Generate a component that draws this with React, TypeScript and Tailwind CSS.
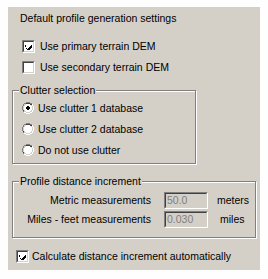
import React from "react";

const font = { fontFamily: '"Liberation Sans", Arial, sans-serif' };

function CheckBox({ checked }: { checked: boolean }) {
  return (
    <div className="w-[13px] h-[13px] border border-t-[#808080] border-l-[#808080] border-b-white border-r-white shrink-0">
      <div className="w-full h-full border border-t-[#404040] border-l-[#404040] border-b-[#d4d0c8] border-r-[#d4d0c8] bg-white flex items-center justify-center">
        {checked && (
          <svg width="7" height="7" viewBox="0 0 7 7" shapeRendering="crispEdges">
            <path d="M0 2h1v3h1v1h1v-1h1v-1h1v-1h1v-1h1v3h-1v1h-1v1h-1v1h-1v-1h-1v-1h-1z" fill="#000" />
          </svg>
        )}
      </div>
    </div>
  );
}

function Radio({ checked }: { checked: boolean }) {
  return (
    <svg width="12" height="12" viewBox="0 0 12 12" className="shrink-0" shapeRendering="crispEdges">
      <path d="M4 0h4v1h2v1h-2v-1h-4v1h-2v2h-1v4h1v2h-1v-2h-1v-4h1v-2h1v-1h2z" fill="#808080" />
      <path d="M4 1h4v1h2v1h-2v-1h-4v1h-2v1h-1v4h1v1h-1v-5h1v-1h2z" fill="#404040" />
      <path d="M10 2h1v2h1v4h-1v2h-1v1h-2v1h-4v-1h-2v-1h2v1h4v-1h2v-2h1v-4h-1z" fill="#ffffff" />
      <path d="M4 2h4v1h1v1h1v4h-1v1h-1v1h-4v-1h-1v-1h-1v-4h1v-1h1z" fill="#ffffff" />
      <path d="M10 4h1v4h-1v2h-2v1h-4v-1h4v-1h1v-1h1z" fill="#d4d0c8" />
      {checked && <path d="M5 4h2v1h1v2h-1v1h-2v-1h-1v-2h1z" fill="#000" />}
    </svg>
  );
}

function GroupBox({
  label,
  className,
  children,
}: {
  label: string;
  className: string;
  children: React.ReactNode;
}) {
  return (
    <div
      className={
        "relative border border-[#808080] shadow-[1px_1px_0_#ffffff,inset_1px_1px_0_#ffffff] " +
        className
      }
    >
      <span className="absolute left-[6px] top-[-8px] bg-[#d4d0c8] px-[1px] leading-[14px]">
        {label}
      </span>
      {children}
    </div>
  );
}

function TextBox({ value }: { value: string }) {
  return (
    <div className="w-[44px] h-[17px] border border-t-[#808080] border-l-[#808080] border-b-white border-r-white shrink-0">
      <div className="w-full h-full border border-t-[#404040] border-l-[#404040] border-b-[#d4d0c8] border-r-[#d4d0c8] bg-[#d4d0c8] text-[#808080] pl-[1px] leading-[13px]">
        {value}
      </div>
    </div>
  );
}

export default function App() {
  return (
    <div className="w-[268px] h-[279px] bg-[#fefefe] pt-[7px] pl-[8px]" style={font}>
      <div className="w-[252px] h-[263px] bg-[#d4d0c8] text-black text-[10.5px] flex flex-col">
        <div className="ml-[12px] mt-[4px] h-[14px] leading-[14px]">
          Default profile generation settings
        </div>
        <div className="ml-[14px] mt-[15px] h-[13px] flex items-center gap-[5px]">
          <CheckBox checked />
          <span className="leading-[13px]">Use primary terrain DEM</span>
        </div>
        <div className="ml-[14px] mt-[8px] h-[13px] flex items-center gap-[5px]">
          <CheckBox checked={false} />
          <span className="leading-[13px]">Use secondary terrain DEM</span>
        </div>
        <GroupBox label="Clutter selection" className="ml-[4px] mt-[16px] w-[184px] h-[74px]">
          <div className="flex flex-col pl-[9px] pt-[11px] gap-[9px]">
            <div className="h-[12px] flex items-center gap-[4px]">
              <Radio checked />
              <span className="leading-[12px]">Use clutter 1 database</span>
            </div>
            <div className="h-[12px] flex items-center gap-[4px]">
              <Radio checked={false} />
              <span className="leading-[12px]">Use clutter 2 database</span>
            </div>
            <div className="h-[12px] flex items-center gap-[4px]">
              <Radio checked={false} />
              <span className="leading-[12px]">Do not use clutter</span>
            </div>
          </div>
        </GroupBox>
        <GroupBox label="Profile distance increment" className="ml-[4px] mt-[17px] w-[244px] h-[57px]">
          <div className="flex flex-col pt-[10px] gap-[2px]">
            <div className="flex items-center h-[17px]">
              <span className="w-[138px] text-right leading-[13px]">Metric measurements</span>
              <span className="w-[13px]" />
              <TextBox value="50.0" />
              <span className="ml-[9px] leading-[13px]">meters</span>
            </div>
            <div className="flex items-center h-[17px]">
              <span className="w-[138px] text-right leading-[13px]">Miles - feet measurements</span>
              <span className="w-[13px]" />
              <TextBox value="0.030" />
              <span className="ml-[12px] leading-[13px]">miles</span>
            </div>
          </div>
        </GroupBox>
        <div className="ml-[8px] mt-[12px] h-[13px] flex items-center gap-[3px]">
          <CheckBox checked />
          <span className="leading-[13px]">Calculate distance increment automatically</span>
        </div>
      </div>
    </div>
  );
}
